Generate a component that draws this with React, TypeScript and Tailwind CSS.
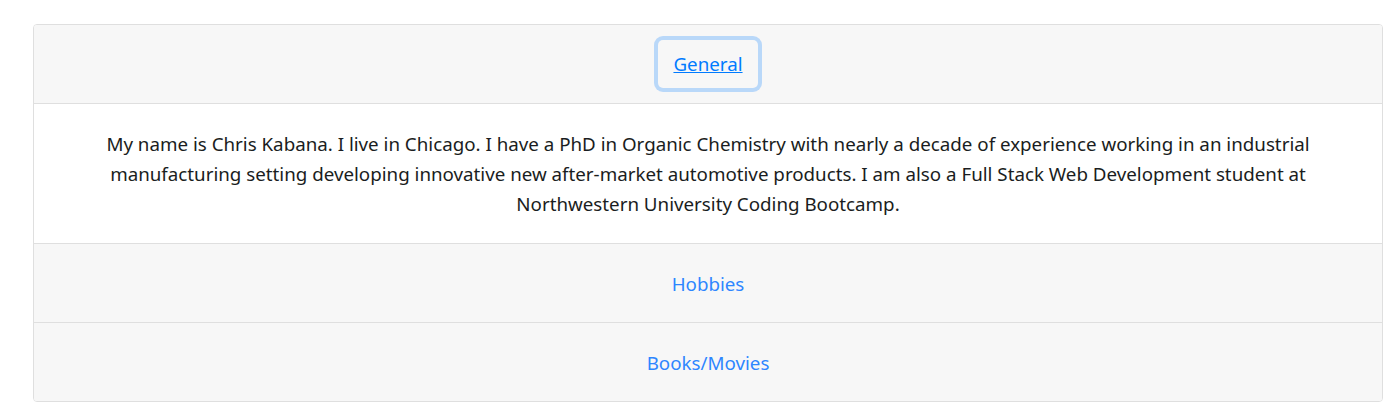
import React from "react";

export default function App() {
  return (
    <div className="min-h-[411px] bg-white pl-[33px] pt-[24px]" style={{ fontFamily: '"Noto Sans", "Open Sans", sans-serif' }}>
      <div className="w-[1350px] overflow-hidden rounded-[4px] border border-[#dfdfdf] text-center text-[18.75px] leading-[30px]">
        <div className="flex h-[79px] items-center justify-center border-b border-[#dfdfdf] bg-[#f7f7f7]">
          <button className="rounded-[5px] px-[15px] py-[9px] text-[#007bff] underline shadow-[0_0_0_4px_rgba(0,123,255,0.25)]">
            General
          </button>
        </div>
        <div className="border-b border-[#dfdfdf] bg-white px-5 pb-[24px] pt-[25px] text-[#1a1d21]">
          My name is Chris Kabana. I live in Chicago. I have a PhD in Organic Chemistry with nearly a decade of experience working in an industrial manufacturing setting developing innovative new after-market automotive products. I am also a Full Stack Web Development student at Northwestern University Coding Bootcamp.
        </div>
        <div className="flex h-[79px] items-center justify-center border-b border-[#dfdfdf] bg-[#f7f7f7] pt-[2px]">
          <span className="text-[#2e86ff]">Hobbies</span>
        </div>
        <div className="flex h-[78px] items-center justify-center bg-[#f7f7f7] pt-[2px]">
          <span className="text-[#2e86ff]">Books/Movies</span>
        </div>
      </div>
    </div>
  );
}
